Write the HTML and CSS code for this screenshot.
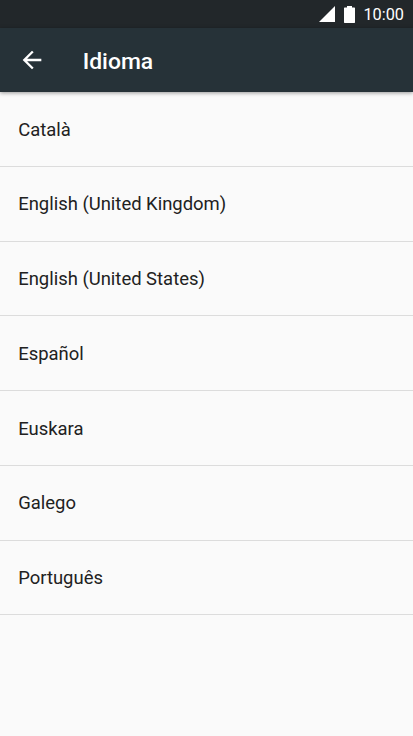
FILE: index.html
```html
<!DOCTYPE html>
<html lang="es">
<head>
  <meta charset="UTF-8" />
  <title>Idioma</title>
  <meta name="viewport" content="width=device-width, initial-scale=1" />
  <link rel="stylesheet" href="styles.css">
</head>
<body>
  <!-- Status bar -->
  <div class="status-bar">
    <svg class="signal" viewBox="0 0 16 16"><path d="M0 16L16 0V16Z" /></svg>
    <svg class="battery" viewBox="0 0 11 17"><path d="M3 0H8V1.5H10.5L11 2V16.5L10.5 17H0.5L0 16.5V2L0.5 1.5H3Z" /></svg>
    <span class="clock">10:00</span>
  </div>

  <!-- App bar -->
  <header class="app-bar">
    <button type="button" class="back" aria-label="Atrás">
      <svg viewBox="0 0 24 24"><path d="M20 11H7.83l5.59-5.59L12 4l-8 8 8 8 1.41-1.41L7.83 13H20v-2z" /></svg>
    </button>
    <h1>Idioma</h1>
  </header>

  <ul class="languages">
    <li>Català</li>
    <li>English (United Kingdom)</li>
    <li>English (United States)</li>
    <li>Español</li>
    <li>Euskara</li>
    <li>Galego</li>
    <li>Português</li>
  </ul>
</body>
</html>
```
FILE: styles.css
```css
* {
  box-sizing: border-box;
}
body {
  margin: 0;
  min-height: 100vh;
  font-family: Roboto, sans-serif;
  background: #fafafa;
  color: #212121;
}
.status-bar {
  display: flex;
  align-items: center;
  justify-content: flex-end;
  height: 28px;
  padding-right: 9px;
  background: #22272a;
  color: #fff;
}
.status-bar svg {
  fill: #fff;
}
.signal {
  width: 16px;
  height: 16px;
  margin-right: 9px;
}
.battery {
  width: 11px;
  height: 17px;
  margin-right: 8px;
}
.clock {
  padding-top: 1px;
  font-size: 16.3px;
  color: #fff;
}
.app-bar {
  display: flex;
  align-items: center;
  height: 64px;
  padding-left: 18px;
  background: #263238;
  color: #fff;
  box-shadow: 0 1px 4px rgba(0, 0, 0, 0.4);
}
.back {
  width: 28px;
  height: 28px;
  margin-right: 36.7px;
  padding: 0;
  border: none;
  background: none;
}
.back svg {
  display: block;
  fill: #fff;
}
h1 {
  margin: 3px 0 0;
  font-size: 22.9px;
  font-weight: 500;
}
.languages {
  margin: 0;
  padding: 0;
  list-style: none;
}
.languages li {
  display: flex;
  align-items: center;
  height: 74.75px;
  padding: 1.6px 0 0 18.2px;
  border-bottom: 1px solid #dcdcdc;
  font-size: 18.45px;
}
```
